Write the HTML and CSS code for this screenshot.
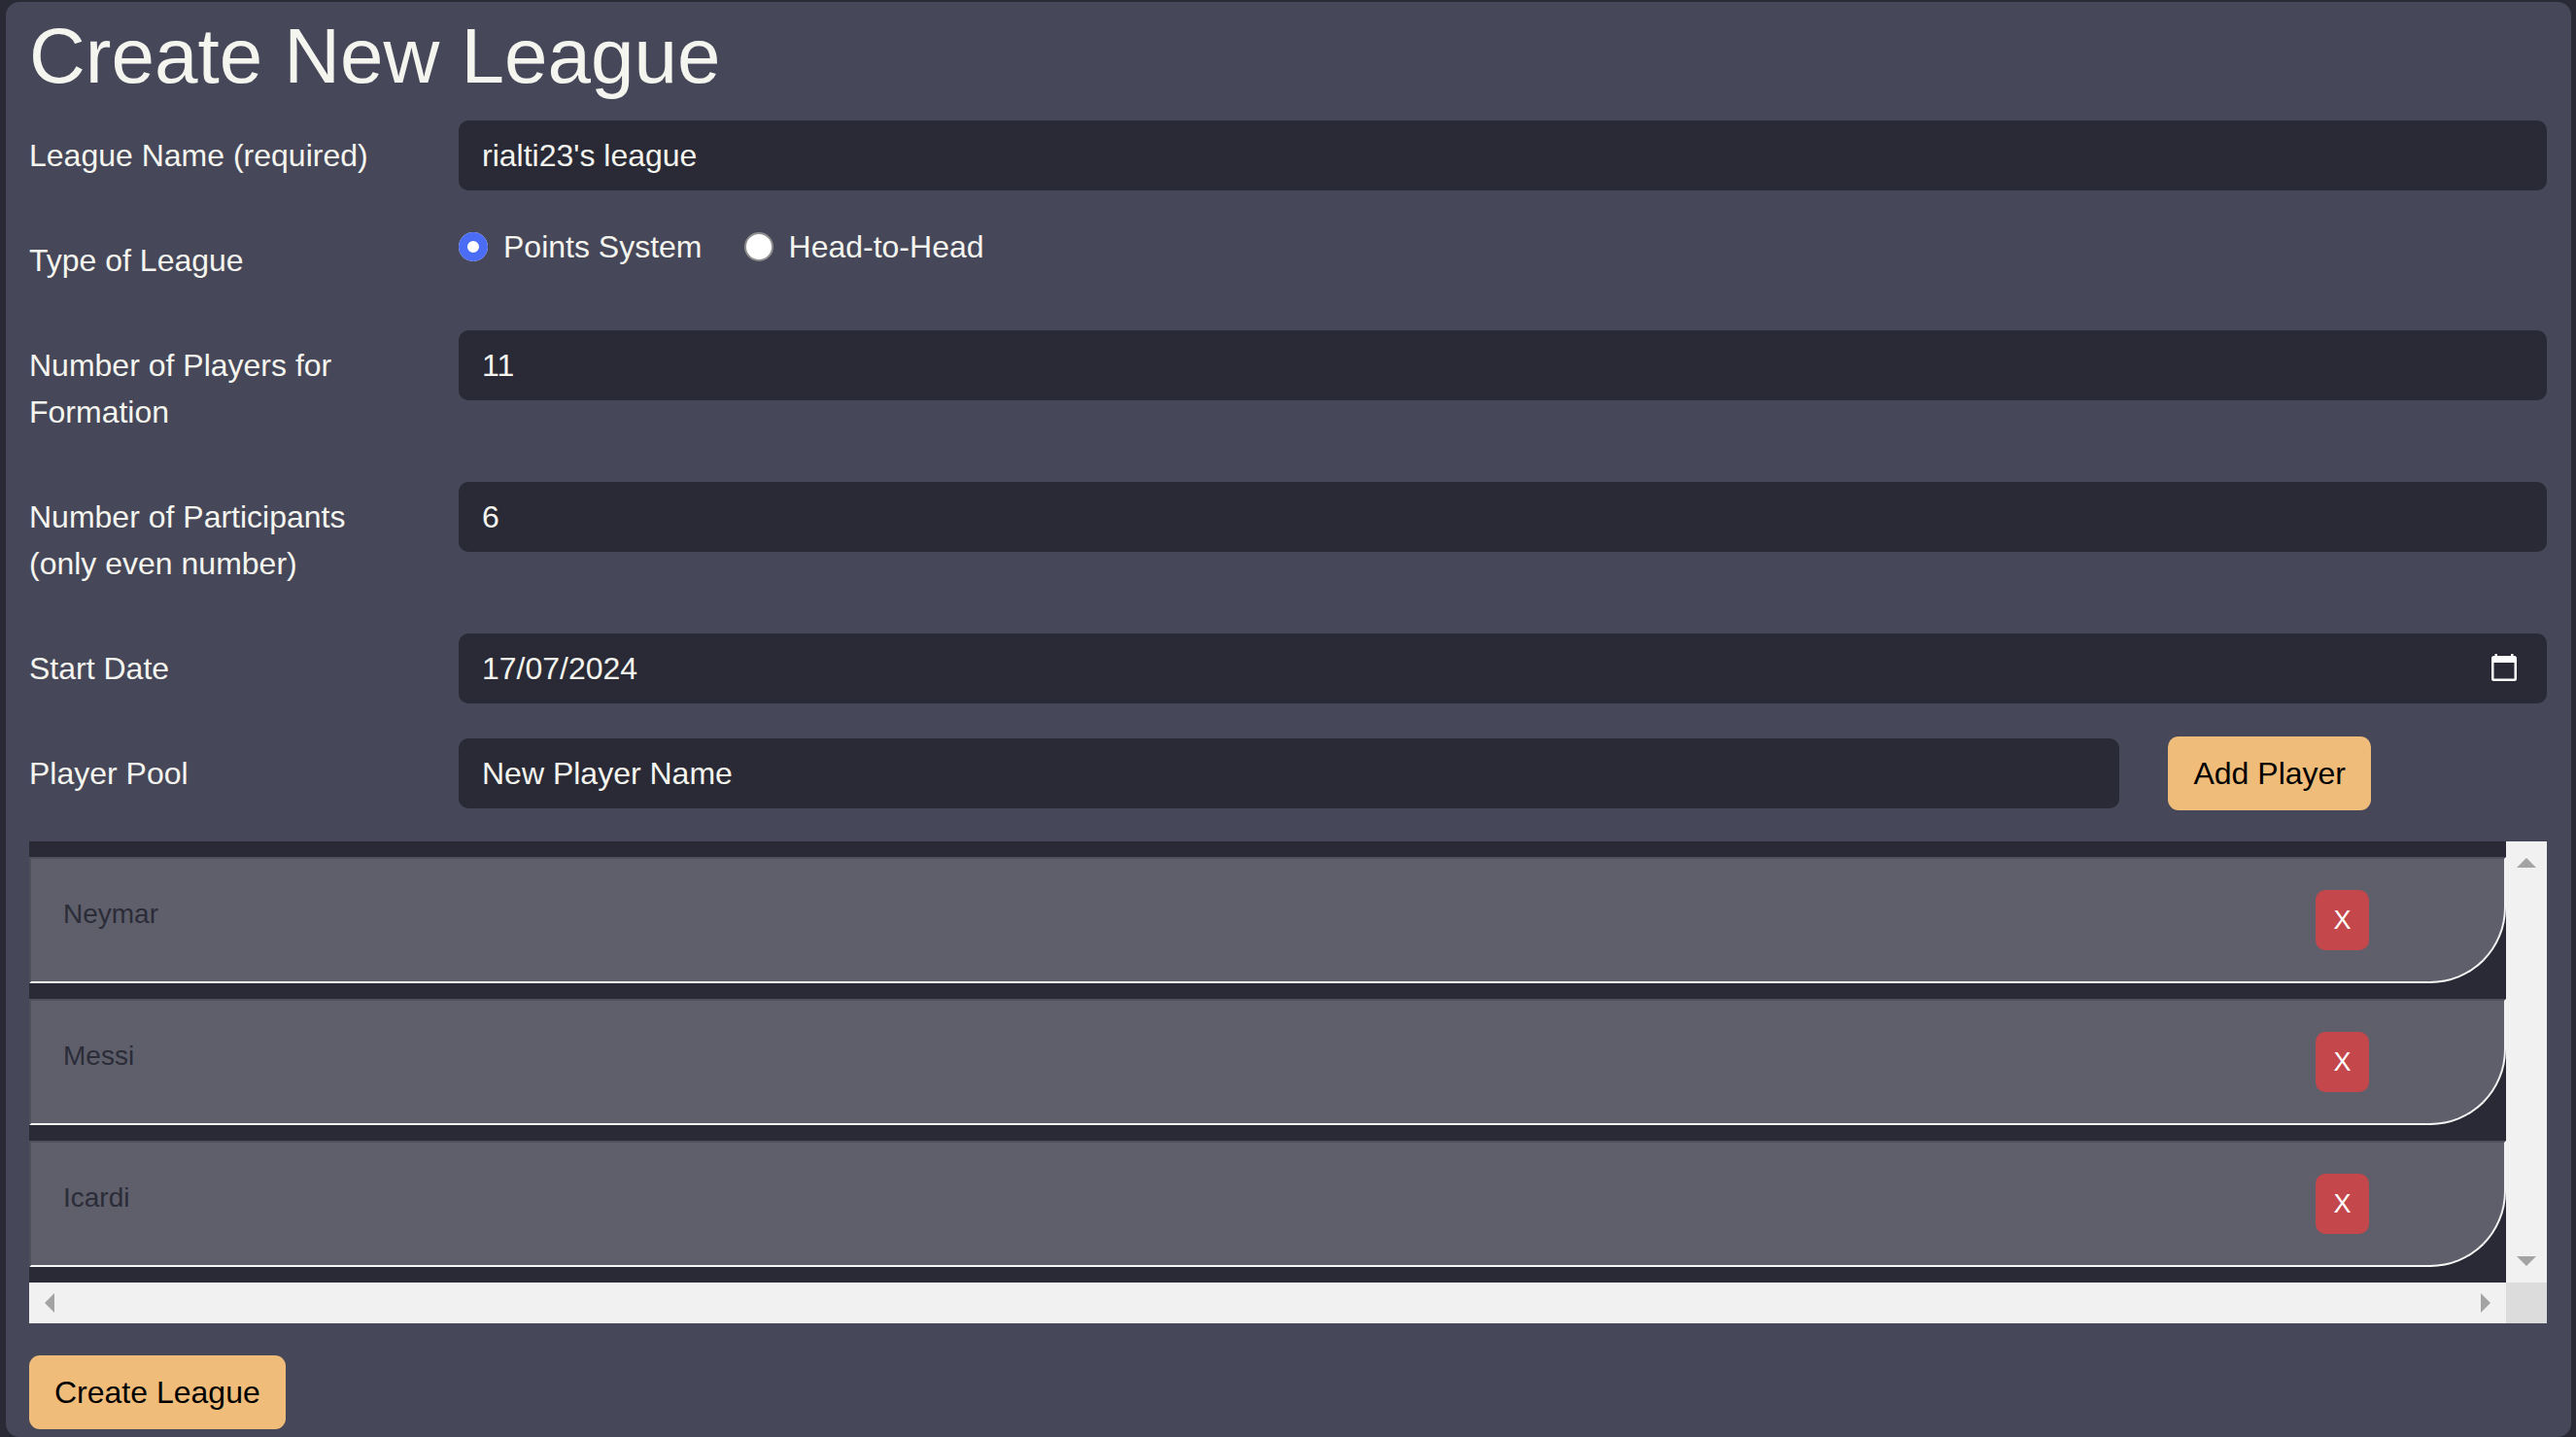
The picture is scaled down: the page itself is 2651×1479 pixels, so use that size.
FILE: index.html
```html
<!DOCTYPE html>
<html lang="en">
<head>
<meta charset="utf-8">
<title>Create New League</title>
<link rel="stylesheet" href="styles.css">
</head>
<body>
<main class="card">
  <h1 class="title">Create New League</h1>
  <form class="form">
    <label class="label">League Name (required)</label>
    <div class="control"><input class="field" type="text" value="rialti23's league"></div>

    <label class="label">Type of League</label>
    <div class="control radios">
      <label class="radio-opt"><input class="radio" type="radio" name="type" checked><span>Points System</span></label>
      <label class="radio-opt"><input class="radio" type="radio" name="type"><span>Head-to-Head</span></label>
    </div>

    <label class="label">Number of Players for Formation</label>
    <div class="control"><input class="field" type="text" value="11"></div>

    <label class="label">Number of Participants (only even number)</label>
    <div class="control"><input class="field" type="text" value="6"></div>

    <label class="label">Start Date</label>
    <div class="control">
      <div class="field date-field">
        <span>17/07/2024</span>
        <svg class="cal-icon" width="26" height="28" viewBox="0 0 26 28" aria-hidden="true">
          <path fill="#ffffff" fill-rule="evenodd" d="M2.5 2h21a2.5 2.5 0 0 1 2.5 2.5v21a2.5 2.5 0 0 1-2.5 2.5h-21A2.5 2.5 0 0 1 0 25.5v-21A2.5 2.5 0 0 1 2.5 2zM2.5 9v16.5h21V9z"/>
          <rect x="3.5" y="0" width="2.5" height="3" fill="#ffffff"/>
          <rect x="20" y="0" width="2.5" height="3" fill="#ffffff"/>
        </svg>
      </div>
    </div>

    <label class="label">Player Pool</label>
    <div class="control pool">
      <input class="field pool-input" type="text" value="New Player Name">
      <button class="btn" type="button">Add Player</button>
    </div>
  </form>

  <div class="scroller">
    <div class="viewport">
      <div class="item"><span class="name">Neymar</span><button class="del" type="button">X</button></div>
      <div class="item"><span class="name">Messi</span><button class="del" type="button">X</button></div>
      <div class="item"><span class="name">Icardi</span><button class="del" type="button">X</button></div>
    </div>
    <div class="vbar">
      <span class="arrow up"></span>
      <span class="arrow down"></span>
    </div>
    <div class="hbar">
      <span class="arrow left"></span>
      <span class="arrow right"></span>
    </div>
    <div class="corner"></div>
  </div>

  <button class="btn create" type="button">Create League</button>
</main>
</body>
</html>
```

FILE: styles.css
```css
html, body {
  margin: 0;
  padding: 0;
  background: #2a2a36;
  height: 100%;
  overflow: hidden;
}

body {
  font-family: "Liberation Sans", Arial, sans-serif;
  color: #f5f5ef;
}

.card {
  margin: 2px 5px 0 6px;
  padding: 10px 25px 8px 24px;
  background: #464759;
  border-radius: 14px;
  box-sizing: border-box;
  min-height: 1477px;
}

.title {
  margin: 0;
  font-size: 80px;
  line-height: 92px;
  font-weight: 400;
  color: #f5f5ef;
}

.form {
  margin-top: 20px;
  display: grid;
  grid-template-columns: 380px 1fr;
  column-gap: 62px;
  row-gap: 36px;
  align-items: start;
}

.label {
  padding: 12px 0;
  font-size: 32px;
  line-height: 48px;
  color: #f5f5ef;
}

.control {
  min-width: 0;
}

.field {
  display: block;
  width: 100%;
  height: 72px;
  box-sizing: border-box;
  border: none;
  outline: none;
  border-radius: 10px;
  background: #2a2a36;
  color: #f5f5ef;
  font-family: "Liberation Sans", Arial, sans-serif;
  font-size: 32px;
  padding: 0 24px;
  margin: 0;
}

.date-field {
  display: flex;
  align-items: center;
  justify-content: space-between;
  padding-right: 31px;
}

.cal-icon {
  display: block;
  margin-top: -2px;
}

.radios {
  display: flex;
  align-items: center;
  height: 48px;
  margin-top: -2px;
  font-size: 32px;
}

.radio-opt {
  display: flex;
  align-items: center;
  gap: 16px;
  margin-right: 43px;
}

.radio {
  appearance: none;
  -webkit-appearance: none;
  margin: 0;
  width: 30px;
  height: 30px;
  border-radius: 50%;
  box-sizing: border-box;
  background: #ffffff;
  border: 2px solid #8f8f8f;
}

.radio:checked {
  border: none;
  background: #ffffff;
  box-shadow: inset 0 0 0 9px #4b6cf4;
}

.pool {
  display: flex;
  align-items: center;
  gap: 50px;
  margin-top: -2px;
}

.pool-input {
  flex: 1;
  width: auto;
  min-width: 0;
}

.btn {
  border: none;
  border-radius: 11px;
  background: #efbc7a;
  color: #000000;
  font-family: "Liberation Sans", Arial, sans-serif;
  font-size: 32px;
  line-height: 48px;
  padding: 14px 26px;
  margin: 0;
  cursor: pointer;
}

.pool .btn {
  margin-right: 181px;
  flex: none;
}

.scroller {
  margin-top: 32px;
  display: grid;
  grid-template-columns: 1fr 42px;
  grid-template-rows: 454px 42px;
}

.viewport {
  overflow: hidden;
  background: #2a2a36;
  padding: 16px 0;
  box-sizing: border-box;
  display: flex;
  flex-direction: column;
  gap: 16px;
}

.item {
  flex: none;
  height: 130px;
  box-sizing: border-box;
  display: flex;
  align-items: center;
  background: #5e5f6b;
  border-style: solid;
  border-width: 2px;
  border-color: #4f505c #f2f2f2 #f8f8f8 #4f505c;
  border-bottom-right-radius: 78px;
  padding-left: 33px;
}

.name {
  font-size: 28px;
  line-height: 34px;
  color: #2b2c38;
  margin-bottom: 12px;
}

.del {
  margin-left: auto;
  margin-right: 139px;
  width: 55px;
  height: 62px;
  border: none;
  border-radius: 10px;
  background: #c3474b;
  color: #ffffff;
  font-family: "Liberation Sans", Arial, sans-serif;
  font-size: 27px;
  padding: 0;
}

.vbar {
  background: #f1f1f1;
  display: flex;
  flex-direction: column;
  align-items: center;
  justify-content: space-between;
  padding: 17px 0;
  box-sizing: border-box;
}

.hbar {
  background: #f1f1f1;
  display: flex;
  align-items: center;
  justify-content: space-between;
  padding: 0 16px;
  box-sizing: border-box;
}

.corner {
  background: #dcdcdc;
}

.arrow {
  width: 0;
  height: 0;
  display: block;
}

.arrow.up {
  border-left: 10px solid transparent;
  border-right: 10px solid transparent;
  border-bottom: 10px solid #a3a3a3;
}

.arrow.down {
  border-left: 10px solid transparent;
  border-right: 10px solid transparent;
  border-top: 10px solid #a3a3a3;
}

.arrow.left {
  border-top: 10px solid transparent;
  border-bottom: 10px solid transparent;
  border-right: 10px solid #a3a3a3;
}

.arrow.right {
  border-top: 10px solid transparent;
  border-bottom: 10px solid transparent;
  border-left: 10px solid #a3a3a3;
}

.create {
  display: block;
  margin-top: 33px;
}
```
